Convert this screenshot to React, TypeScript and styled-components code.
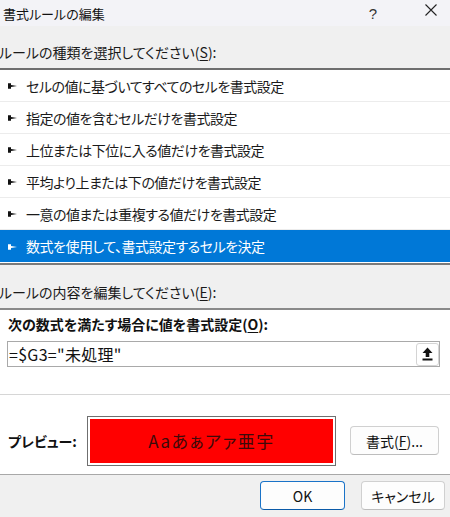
import React from 'react'
import styled, { createGlobalStyle } from 'styled-components'

const GlobalStyle = createGlobalStyle`
  html, body {
    margin: 0;
    padding: 0;
    background: #f0f0f0;
  }
  body {
    font-family: "Noto Sans CJK JP", "Noto Sans", sans-serif;
    font-feature-settings: "palt";
    color: #1a1a1a;
  }
`

const rules = [
  'セルの値に基づいてすべてのセルを書式設定',
  '指定の値を含むセルだけを書式設定',
  '上位または下位に入る値だけを書式設定',
  '平均より上または下の値だけを書式設定',
  '一意の値または重複する値だけを書式設定',
  '数式を使用して、書式設定するセルを決定',
]

const Pointer = ({ color }: { color: string }) => (
  <svg width='9' height='6' viewBox='0 0 9 6'>
    <path d='M0 0.3 L3 0.3 L3 2 L9 3 L3 4 L3 5.7 L0 5.7 Z' fill={color} />
  </svg>
)

const UploadIcon = () => (
  <svg width='11' height='14' viewBox='0 0 11 14'>
    <path d='M5.5 0.5 L10.5 6 L7.3 6 L7.3 10 L3.7 10 L3.7 6 L0.5 6 Z' fill='#111' />
    <rect x='0.5' y='11.5' width='10' height='2' fill='#111' />
  </svg>
)

export const App = () => {
  const selected = 5
  return (
    <>
      <GlobalStyle />
      <Dialog>
        <TitleBar>
          <span className='title'>書式ルールの編集</span>
          <span className='help'>?</span>
          <svg className='close' width='12' height='12' viewBox='0 0 12 12'>
            <path d='M0.5 0.5 L11.5 11.5 M11.5 0.5 L0.5 11.5' stroke='#222' strokeWidth='1.1' />
          </svg>
        </TitleBar>

        <SectionLabel $height={42}>
          ルールの種類を選択してください(<u>S</u>):
        </SectionLabel>

        <RuleList>
          {rules.map((r, i) => (
            <RuleRow key={r} $active={i === selected} $last={i === rules.length - 1}>
              <Pointer color={i === selected ? '#fff' : '#111'} />
              <span>{r}</span>
            </RuleRow>
          ))}
        </RuleList>

        <SectionLabel $height={43}>
          ルールの内容を編集してください(<u>E</u>):
        </SectionLabel>

        <EditPanel>
          <FormulaBlock>
            <BoldLabel>
              次の数式を満たす場合に値を書式設定(<u>O</u>):
            </BoldLabel>
            <FormulaInput>
              <span>=$G3="未処理"</span>
              <RefButton>
                <UploadIcon />
              </RefButton>
            </FormulaInput>
          </FormulaBlock>
          <PreviewRow>
            <BoldLabel>プレビュー:</BoldLabel>
            <PreviewBox>
              <div>Aaあぁアァ亜宇</div>
            </PreviewBox>
            <Button $w={89}>書式(<u>F</u>)...</Button>
          </PreviewRow>
        </EditPanel>

        <Footer>
          <Button $w={85} $primary>OK</Button>
          <Button $w={84}>キャンセル</Button>
        </Footer>
      </Dialog>
    </>
  )
}

export default App

const Dialog = styled.div`
  width: 450px;
  height: 517px;
  overflow: hidden;
  display: flex;
  flex-direction: column;
  background: #f0f0f0;
`

const TitleBar = styled.div`
  height: 26px;
  flex-shrink: 0;
  display: flex;
  align-items: center;
  background: #f3f3f7;
  font-size: 13px;

  .title {
    margin-left: 3px;
    flex: 1;
    color: #111;
  }
  .help {
    font-family: "Liberation Sans", sans-serif;
    font-size: 15px;
    color: #333;
    margin-right: 48px;
    margin-top: 1px;
  }
  .close {
    margin-right: 13px;
    margin-top: -6px;
  }
`

const SectionLabel = styled.div<{ $height: number }>`
  height: ${p => p.$height}px;
  flex-shrink: 0;
  display: flex;
  align-items: flex-end;
  padding-bottom: 6px;
  box-sizing: border-box;
  margin-left: -1px;
  font-size: 14px;
  color: #1a1a1a;

  u {
    text-decoration-thickness: 1px;
    text-underline-offset: 2px;
  }
`

const RuleList = styled.div`
  flex-shrink: 0;
  background: #fff;
  border-top: 2px solid #6e6e6e;
  border-bottom: 2px solid #7a7a7a;
  padding-bottom: 1px;
`

const RuleRow = styled.div<{ $active: boolean; $last: boolean }>`
  height: 32px;
  box-sizing: border-box;
  display: flex;
  align-items: center;
  padding-left: 8px;
  gap: 9px;
  font-size: 14px;
  letter-spacing: -0.5px;
  background: ${p => (p.$active ? '#0078d7' : '#fff')};
  color: ${p => (p.$active ? '#fff' : '#1a1a1a')};
  border-bottom: ${p => (p.$last ? 'none' : '1px solid #ececec')};

  svg {
    flex-shrink: 0;
    margin-top: 1px;
  }
`

const EditPanel = styled.div`
  flex-shrink: 0;
  background: #fff;
  border-top: 2px solid #8a8a8a;
  border-bottom: 1px solid #a8a8a8;
  height: 167px;
  box-sizing: border-box;
  display: flex;
  flex-direction: column;
`

const FormulaBlock = styled.div`
  height: 85px;
  box-sizing: border-box;
  padding: 4px 10px 0 7px;
  border-bottom: 1px solid #d6d6d6;
  display: flex;
  flex-direction: column;
  gap: 7px;
`

const BoldLabel = styled.div`
  font-size: 14px;
  font-weight: 700;
  color: #111;
  padding-left: 1px;

  u {
    text-decoration-thickness: 1px;
    text-underline-offset: 2px;
  }
`

const FormulaInput = styled.div`
  height: 26px;
  box-sizing: border-box;
  border: 1px solid #a9a9a9;
  display: flex;
  align-items: center;
  justify-content: space-between;
  padding-left: 1px;
  font-size: 16px;
  letter-spacing: 0.3px;
  color: #111;
`

const RefButton = styled.div`
  width: 23px;
  height: 23px;
  box-sizing: border-box;
  border: 1px solid #d4d4d4;
  border-radius: 3px;
  background: #fff;
  display: flex;
  align-items: center;
  justify-content: center;
`

const PreviewRow = styled.div`
  flex: 1;
  display: flex;
  align-items: center;
  padding: 12px 11px 0 7px;
  box-sizing: border-box;

  ${BoldLabel} {
    width: 79px;
  }
`

const PreviewBox = styled.div`
  width: 249px;
  height: 50px;
  box-sizing: border-box;
  border: 1px solid #6f6f6f;
  padding: 2px;
  margin-right: 14px;

  div {
    height: 100%;
    background: #ff0000;
    display: flex;
    align-items: center;
    justify-content: center;
    font-size: 17px;
    color: #3d0a0a;
    letter-spacing: 1.5px;
  }
`

const Button = styled.div<{ $w: number; $primary?: boolean }>`
  width: ${p => p.$w}px;
  height: 29px;
  box-sizing: border-box;
  border: 1px solid ${p => (p.$primary ? '#1a73c8' : '#d0d0d0')};
  border-bottom-color: ${p => (p.$primary ? '#0a5aa8' : '#bdbdbd')};
  border-radius: 4px;
  background: #fdfdfd;
  display: flex;
  align-items: center;
  justify-content: center;
  font-size: 14px;
  color: #111;
  flex-shrink: 0;

  u {
    text-decoration-thickness: 1px;
    text-underline-offset: 2px;
  }
`

const Footer = styled.div`
  flex: 1;
  display: flex;
  justify-content: flex-end;
  align-items: flex-start;
  gap: 16px;
  padding: 6px 5px 0 0;
`
